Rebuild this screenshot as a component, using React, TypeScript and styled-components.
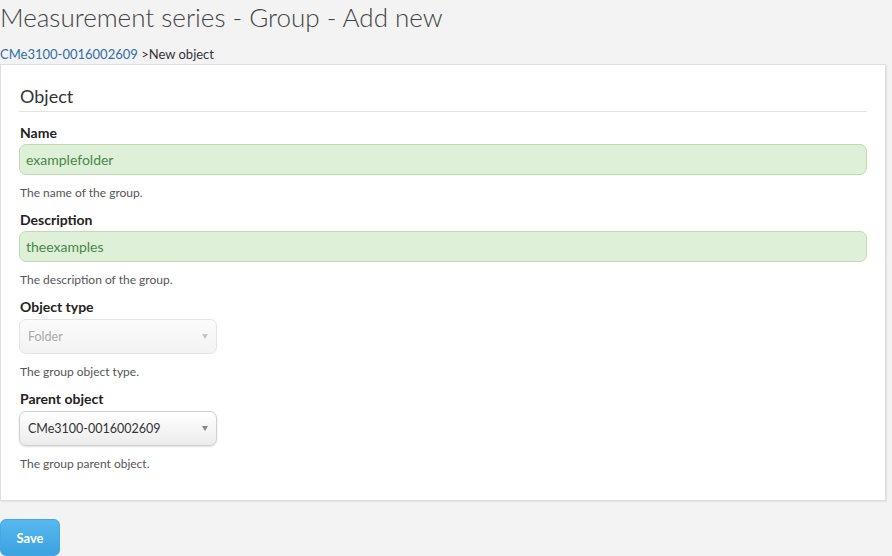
import React from 'react';
import styled, { createGlobalStyle } from 'styled-components';

const GlobalStyle = createGlobalStyle`
  html, body {
    margin: 0;
    padding: 0;
    background: #f3f3f3;
  }
  body {
    font-family: Lato, "Open Sans", "Liberation Sans", sans-serif;
    color: #333333;
  }
`;

const Page = styled.div`
  width: 892px;
  height: 556px;
  overflow: hidden;
`;

const Title = styled.h1`
  margin: 0;
  padding-top: 2px;
  font-size: 26px;
  font-weight: 300;
  line-height: 30px;
  color: #444444;
`;

const Breadcrumb = styled.div`
  margin-top: 14px;
  font-size: 13px;
  line-height: 16px;
  color: #333333;

  & > a {
    color: #2f6ea5;
    text-decoration: none;
  }
`;

const Panel = styled.div`
  box-sizing: border-box;
  width: 886px;
  margin-top: 2px;
  padding: 20px 18px 29px 18px;
  background: #ffffff;
  border: 1px solid #dedede;
  box-shadow: 1px 1px 1px rgba(0, 0, 0, 0.06);
`;

const Legend = styled.div`
  font-size: 18px;
  line-height: 22px;
  color: #333333;
  padding: 0 0 4px 1px;
  border-bottom: 1px solid #e3e3e3;
  margin-bottom: 13px;
`;

const Field = styled.div`
  display: flex;
  flex-direction: column;
  align-items: flex-start;
  margin-bottom: 12px;

  &:last-child {
    margin-bottom: 0;
  }
`;

const Label = styled.div`
  font-size: 14px;
  font-weight: 700;
  line-height: 16px;
  color: #222222;
  margin-bottom: 3px;
  padding-left: 1px;
`;

const TextInput = styled.div`
  box-sizing: border-box;
  align-self: stretch;
  height: 31px;
  padding: 0 6px;
  display: flex;
  align-items: center;
  background: #dff0d8;
  border: 1px solid #bfdcb0;
  border-radius: 7px;
  font-size: 14px;
  color: #468847;
`;

const Select = styled.div<{ $disabled?: boolean }>`
  box-sizing: border-box;
  width: 198px;
  height: 35px;
  margin-top: 1px;
  padding: 0 8px;
  display: flex;
  align-items: center;
  justify-content: space-between;
  border: 1px solid ${(p) => (p.$disabled ? '#e4e4e4' : '#cfcfcf')};
  border-radius: 7px;
  background: ${(p) =>
    p.$disabled
      ? 'linear-gradient(#fbfbfb, #f3f3f3)'
      : 'linear-gradient(#ffffff, #ececec)'};
  box-shadow: ${(p) => (p.$disabled ? 'none' : '0 1px 2px rgba(0,0,0,0.12)')};
  font-size: 12.5px;
  color: ${(p) => (p.$disabled ? '#a8a8a8' : '#333333')};
`;

const Caret = styled.span<{ $disabled?: boolean }>`
  width: 0;
  height: 0;
  border-left: 3px solid transparent;
  border-right: 3px solid transparent;
  border-top: 5px solid ${(p) => (p.$disabled ? '#c4c4c4' : '#888888')};
`;

const Help = styled.div`
  margin-top: 11px;
  font-size: 12px;
  line-height: 14px;
  color: #555555;
  padding-left: 1px;
`;

const SaveButton = styled.button`
  margin-top: 18px;
  width: 60px;
  height: 37px;
  border: 1px solid #45a7e3;
  border-radius: 6px;
  background: linear-gradient(#56b8ee, #3ca2e1);
  color: #ffffff;
  font-family: inherit;
  font-size: 13px;
  font-weight: 700;
  cursor: pointer;
`;

const App: React.FC = () => {
  return (
    <Page>
      <GlobalStyle />
      <Title>Measurement series - Group - Add new</Title>
      <Breadcrumb>
        <a href="#">CMe3100-0016002609</a> &gt;New object
      </Breadcrumb>
      <Panel>
        <Legend>Object</Legend>
        <Field>
          <Label>Name</Label>
          <TextInput>examplefolder</TextInput>
          <Help>The name of the group.</Help>
        </Field>
        <Field>
          <Label>Description</Label>
          <TextInput>theexamples</TextInput>
          <Help>The description of the group.</Help>
        </Field>
        <Field>
          <Label>Object type</Label>
          <Select $disabled>
            Folder
            <Caret $disabled />
          </Select>
          <Help>The group object type.</Help>
        </Field>
        <Field>
          <Label>Parent object</Label>
          <Select>
            CMe3100-0016002609
            <Caret />
          </Select>
          <Help>The group parent object.</Help>
        </Field>
      </Panel>
      <SaveButton>Save</SaveButton>
    </Page>
  );
};

export default App;
